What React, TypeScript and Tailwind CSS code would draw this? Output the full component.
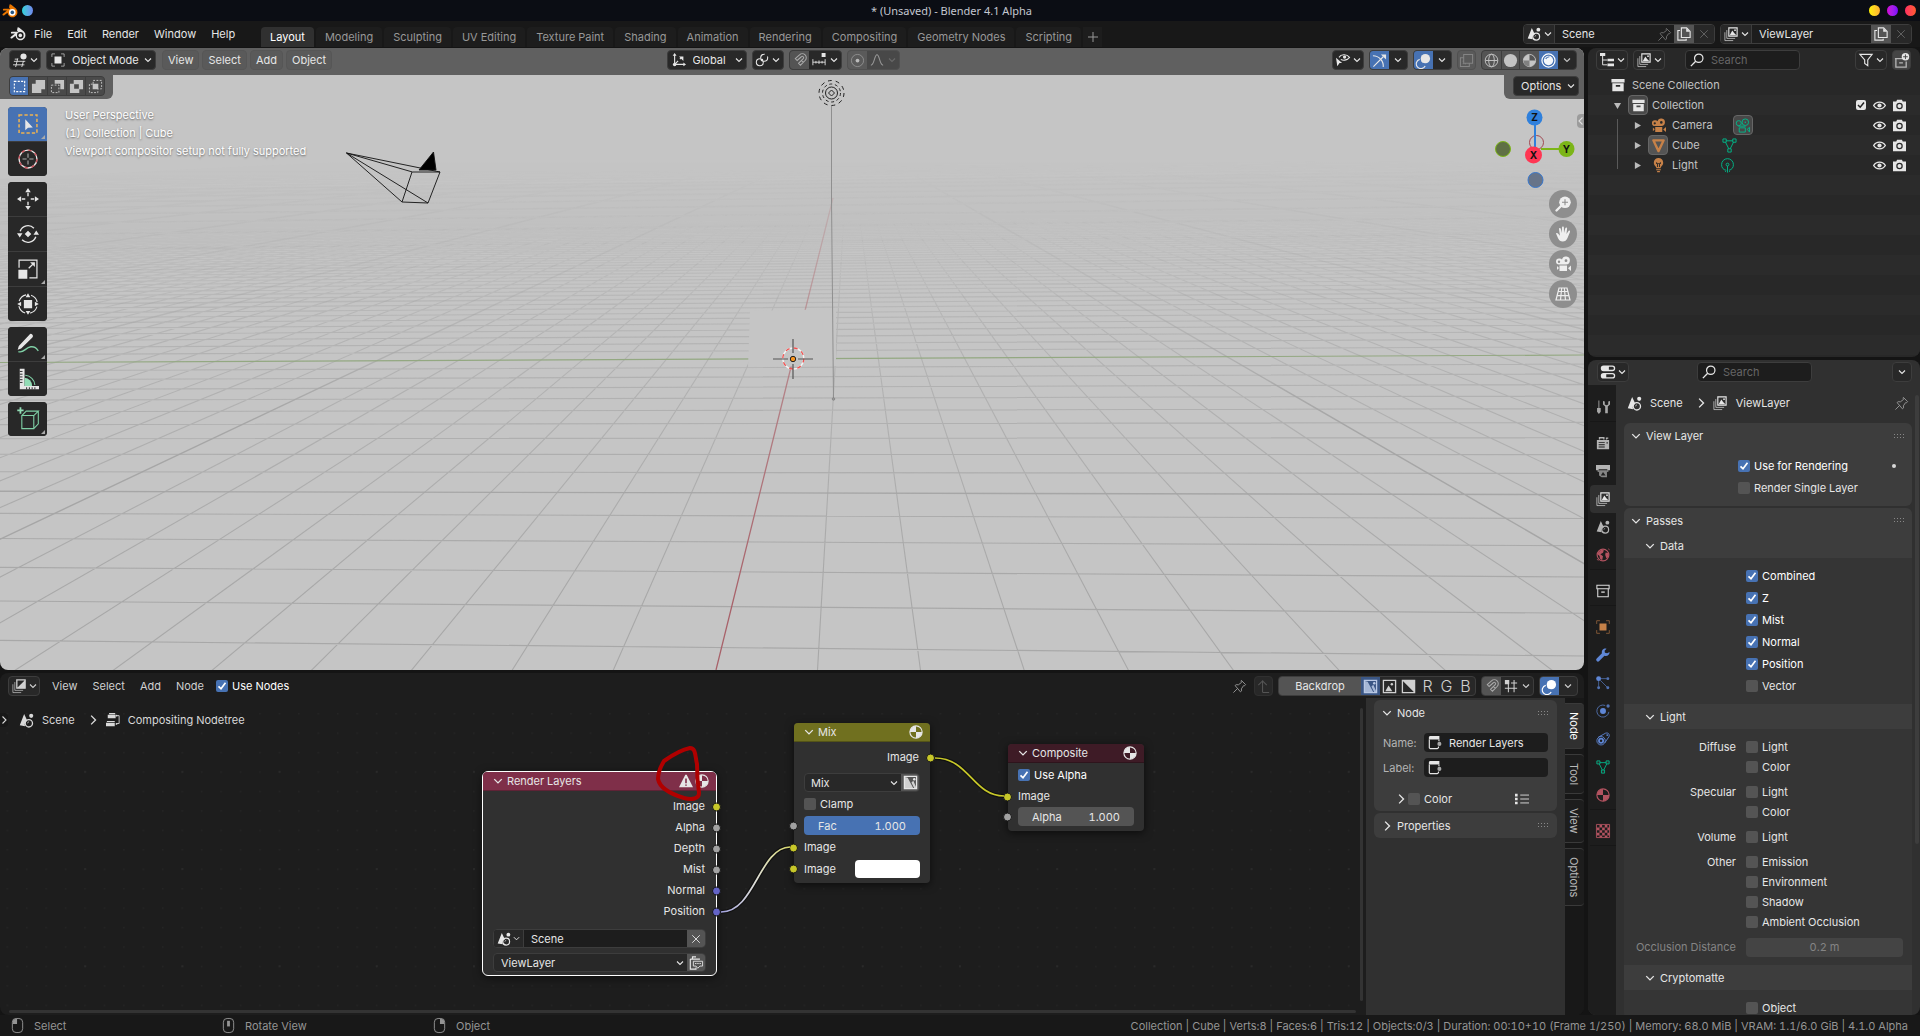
import type { ReactNode } from 'react';
import { clsx } from 'clsx';

const line = { fill: 'none', stroke: 'currentColor' } as const;

const icons: Record<string, ReactNode> = {
  blender: (
    <>
      <path d="M7.6 1.4c.6-.3 1.2 0 1.7.4l4.6 3.8a5 5 0 1 1-8.4 4.2L2 12.4a1 1 0 0 1-1.3-1.5L5 7.6H1.8a.9.9 0 0 1 0-1.8h6.4L7 4.6z" />
      <circle cx="10.3" cy="9.4" r="3.3" fill="var(--hole, #181818)" />
      <circle cx="10.3" cy="9.4" r="1.8" fill="var(--pupil, currentColor)" />
    </>
  ),
  editor3d: (
    <>
      <circle cx="12" cy="4" r="3.5" />
      <path d="M1 9.5h13M0 13.5h13M5.5 6 3 16M12 9l-2 7M2 7h3" {...line} />
    </>
  ),
  objectMode: (
    <>
      <path d="M4 4h8v8H4z" />
      <path d="M1 4.5V1h3.5M11.5 1H15v3.5M15 11.5V15h-3.5M4.5 15H1v-3.5" {...line} opacity=".7" />
    </>
  ),
  selNew: <path d="M2.5 2.5h11v11h-11z" {...line} strokeWidth="1.2" strokeDasharray="2.2 1.4" />,
  selExtend: <path d="M5 1h10v10h-4v4H1V5h4z" />,
  selSub: (
    <>
      <path d="M5 1h10v10h-4V5H5z" />
      <path d="M1.5 6.5h8v8h-8z" {...line} strokeDasharray="2 1.5" />
    </>
  ),
  selInvert: <path fillRule="evenodd" d="M5 1h10v10h-4v4H1V5h4zM5.5 5.5v5h5v-5z" />,
  selAnd: (
    <>
      <path d="M5 5h6v6H5z" />
      <path d="M5.5 5V1.5h9v9H11M5 5.5H1.5v9h9V11" {...line} strokeDasharray="2 1.5" />
    </>
  ),
  selectBox: (
    <>
      <path d="M1.5 1.5h13v13h-13z" fill="none" stroke="#f0b350" strokeWidth="1.1" strokeDasharray="2.4 1.5" />
      <path d="M6 4.5v8l2-1.8 3.5-.2z" />
    </>
  ),
  cursor: (
    <>
      <circle cx="8" cy="8" r="6.5" {...line} />
      <circle cx="8" cy="8" r="6.5" fill="none" stroke="#c9505a" strokeDasharray="2.5 2.6" />
      <path d="M8 4v3M8 9v3M4 8h3M9 8h3" {...line} strokeWidth=".8" opacity=".7" />
    </>
  ),
  move: (
    <>
      <path d="M8 0 10 3H6zM8 16l2-3H6zM0 8l3-2v4zM16 8l-3-2v4z" />
      <path d="M8 3.5v2.5M8 10v2.5M3.5 8H6M10 8h2.5" {...line} />
    </>
  ),
  rotate: (
    <>
      <path d="M2.3 6a6 6 0 0 1 10-2.2M13.7 10a6 6 0 0 1-10 2.2" {...line} />
      <path d="M0 7.5h4L2 10.5zM16 8.5h-4l2-3zM8 5.6 10.4 8 8 10.4 5.6 8z" />
    </>
  ),
  scale: (
    <>
      <path d="M1 8.5h6.5V15H1z" />
      <path d="M1.5 7V1.5h13v13H9M8.5 7.5l3-3" {...line} strokeWidth=".9" />
      <path d="M9.5 3h3.5v3.5z" />
    </>
  ),
  transform: (
    <>
      <path d="M5 5h6v6H5z" />
      <circle cx="8" cy="8" r="6.8" {...line} strokeWidth=".8" strokeDasharray="7 3.7" strokeDashoffset="-2" />
      <path d="M8 .2 9.7 3H6.3zM8 15.8 9.7 13H6.3zM.2 8 3 6.3v3.4zM15.8 8 13 6.3v3.4z" />
    </>
  ),
  annotate: (
    <>
      <path d="M9 1.2a1.2 1.2 0 0 1 2.2 2L3 11.2.5 12.2l.8-2.7z" />
      <path d="M1 13.5c4 1.5 5-3 9-3.5 3-.3 4 1 5.5 3" fill="none" stroke="#7fcfa5" />
    </>
  ),
  measure: (
    <>
      <path d="M2 .5h3.5V13H16v2.5H2z" />
      <path d="M2 2.5h2M2 4.5h2M2 6.5h2M2 8.5h2M2 10.5h2M7 15.5V14M9 15.5V14M11 15.5V14M13 15.5V14" fill="none" stroke="#282828" strokeWidth=".7" />
      <path d="M5.5 7a6 6 0 0 1 5.5 6H5.5z" fill="#92dcb5" />
      <path d="M6 5.3a7.5 7.5 0 0 1 7 7" fill="none" stroke="#7fcfa5" strokeWidth=".8" />
    </>
  ),
  addCube: (
    <>
      <path d="M3.5 5.5h8.7V15H3.5zM3.5 5.5l3.2-3.2h8.8l-3.3 3.2M15.5 2.3v9.2L12.2 15" fill="none" stroke="#7fcfa5" strokeWidth=".8" />
      <path d="M2.5-.5v4.6M.2 1.8h4.6" stroke="#92dcb5" strokeWidth="1.3" />
    </>
  ),
  axes: (
    <>
      <path d="M3 2v11h11M3 13l4-4M9 7l2-2" {...line} strokeWidth="1.3" />
      <path d="M3 0 .8 3h4.4zM16 13l-3-2.2v4.4zM8 4h5v5z" />
      <circle cx="3" cy="13" r="2" />
    </>
  ),
  pivot: (
    <>
      <circle cx="10.5" cy="5.5" r="4" {...line} strokeWidth="1.2" strokeDasharray="19 4" />
      <circle cx="5.5" cy="10.5" r="4" {...line} strokeWidth="1.2" strokeDasharray="19 4" />
      <circle cx="8" cy="8" r="1.4" />
    </>
  ),
  magnet: <path d="M3.5 6 8 2a4.2 4.2 0 0 1 6 6l-5 5-2-2 5-5a1.3 1.3 0 0 0-2-2L5.5 8zM12 10l-2-2" {...line} strokeWidth="1.1" />,
  increment: (
    <>
      <path d="M1 7v7M15 7v7M1 10.5h14M4.5 9v3M8 8.5v4M11.5 9v3" {...line} />
      <path d="M11 0h4.5v4.5H11z" />
    </>
  ),
  propEdit: (
    <>
      <circle cx="8" cy="8" r="6.5" {...line} strokeWidth=".9" opacity=".6" />
      <circle cx="8" cy="8" r="2" />
    </>
  ),
  falloff: <path d="M1 14c4 0 4-12 7-12s3 12 7 12" {...line} strokeWidth="1.2" />,
  visibility: (
    <>
      <path d="M3.5 5C5.5 1.5 12 .8 15.5 5 12.5 9 7.5 8.6 5.5 7.3" {...line} strokeWidth="1.2" />
      <circle cx="9.8" cy="4.7" r="1.9" />
      <path d="M0 5.5 7 11.5H4L1.5 15z" />
    </>
  ),
  gizmo: (
    <>
      <path d="M1 3a11 11 0 0 1 11 12M1.5 14.5 12 4" {...line} strokeWidth="1.2" />
      <path d="M9.5 1.5H15V7z" />
    </>
  ),
  overlay: (
    <>
      <circle cx="10" cy="6" r="5" />
      <path d="M4 6.8a5 5 0 1 0 5.8 7M6 8.5l1.5 1.5" {...line} strokeWidth="1.2" />
    </>
  ),
  xray: (
    <>
      <path d="M5 1.5h9.5V11H5zM5 5H1.5v9.5H11V11" {...line} strokeWidth="1.1" />
      <path d="M4.5 8v3.5H8" {...line} strokeDasharray="1.5 1" />
    </>
  ),
  wire: (
    <>
      <circle cx="8" cy="8" r="6.7" {...line} />
      <ellipse cx="8" cy="8" rx="3" ry="6.7" {...line} />
      <path d="M1.5 8h13" {...line} />
    </>
  ),
  solid: <circle cx="8" cy="8" r="7" />,
  matShade: (
    <>
      <circle cx="8" cy="8" r="6.5" {...line} />
      <path d="M8 8V1.5A6.5 6.5 0 0 0 8 14.5a6.5 6.5 0 0 0 6.5-6.5z" />
      <path d="M8 8v6.5A6.5 6.5 0 0 1 1.5 8z" fill="#545454" opacity=".6" />
    </>
  ),
  rendered: (
    <>
      <circle cx="8" cy="8" r="7" {...line} strokeWidth="1.3" />
      <circle cx="8" cy="8" r="5" opacity=".95" />
      <path d="M5 6.5C6 4.5 7.5 4 9 4" fill="none" stroke="#4772b3" strokeWidth="1.2" />
    </>
  ),
  scene: (
    <>
      <path d="M5.5 1 9 8.5A3.9 3.9 0 0 0 6.5 14L.8 13z" />
      <circle cx="10.5" cy="11" r="3.9" {...line} strokeWidth="1.4" />
      <circle cx="13" cy="3" r="2.2" />
      <path d="M9 11a2 2 0 0 1 1.5-1.6" {...line} strokeWidth=".8" />
    </>
  ),
  pin: <path d="M10 1.5 14.5 6l-1.3 1.3-.9-.2-2.3 3.4.2 2.2-1.2 1L3.3 7l1.2-1 2.3.2 3.3-2.5-.3-1zM6 10l-4.5 4.5" {...line} />,
  copy: (
    <>
      <path d="M5 1h6l4 4v7H5z" {...line} strokeWidth="1.3" />
      <path d="M10.5 1v4.5H15z" />
      <path d="M3.5 4H1v11h9.5v-1.5" {...line} strokeWidth="1.3" />
    </>
  ),
  close: <path d="m3 3 10 10M13 3 3 13" {...line} strokeWidth="1.2" />,
  viewLayer: (
    <>
      <path d="M5.5 1H15v9.5H5.5z" {...line} strokeWidth="1.3" />
      <path d="m6.5 9.5 3-5.5 2.3 3 1 1 1.2 1.5z" />
      <circle cx="12.6" cy="3.6" r="1" />
      <path d="M3.2 3.5V13h9.5M1 6v9.5h9.5" {...line} opacity=".75" />
    </>
  ),
  outliner: (
    <>
      <path d="M0 0h6v3.5H0zM8.5 6.5H16v3H8.5zM8.5 12H16v3H8.5z" />
      <path d="M3 3v10.5h5M3 8h5" {...line} strokeWidth="1.1" />
    </>
  ),
  filter: <path d="M1 1.5h14L10 8v6.5L6.5 12V8z" {...line} strokeWidth="1.3" />,
  newCollection: (
    <>
      <path d="M1 6h9M2 6v9h11V9M5.5 10.5h4" {...line} strokeWidth="1.4" opacity=".7" />
      <circle cx="12.2" cy="4" r="4" />
      <path d="M12.2 1.5v5M9.7 4h5" stroke="#454545" />
    </>
  ),
  collection: (
    <>
      <path d="M.5 1h15v4H.5z" />
      <path fillRule="evenodd" d="M1.5 6h13v9h-13zM5.5 8v2h5V8z" />
    </>
  ),
  collectionLine: (
    <>
      <path d="M1 1.5h14v4H1zM2 5.5h12v9H2z" {...line} strokeWidth="1.2" />
      <path d="M6 8.5h4V10H6z" />
    </>
  ),
  camObj: (
    <>
      <path fillRule="evenodd" d="M4 2.5a2.7 2.7 0 1 0 0 6h7a4 4 0 1 0-4-5A3 3 0 0 0 4 2.5zM4 4.5a1.2 1.2 0 1 1 0 2.4 1.2 1.2 0 0 1 0-2.4zM11 3.3a1.4 1.4 0 1 1 0 2.8 1.4 1.4 0 0 1 0-2.8z" />
      <path d="M4.5 9.5H12V15H4.5zM2 10l2 2-2 2zM16 9.5V15l-3-2.7z" />
    </>
  ),
  camData: (
    <>
      <circle cx="4" cy="5.5" r="2.7" {...line} />
      <circle cx="11" cy="4.5" r="3.5" {...line} />
      <circle cx="11" cy="4.5" r=".8" />
      <path d="M3.5 8.7h8M4.5 10.5H11V15H4.5zM13 12l2.5-2v5z" {...line} />
    </>
  ),
  meshObj: <path d="M2.5 2.5h11L8 14z" {...line} strokeWidth="2.5" strokeLinejoin="round" />,
  meshData: (
    <>
      <path d="M3 3h10L8 13z" {...line} />
      <path d="M1 1h3.5v3.5H1zM11.5 1H15v3.5h-3.5zM6.2 11.5h3.6V15H6.2z" fill="#2b2b2b" stroke="currentColor" />
    </>
  ),
  bulb: (
    <>
      <path fillRule="evenodd" d="M8 0a5 5 0 0 1 5 5c0 3-2.5 3.5-2.8 6H5.8C5.5 8.5 3 8 3 5a5 5 0 0 1 5-5zM5.5 4.5v2h1v3h1v-3h1v3h1v-3h1v-2h-1v1h-3v-1z" />
      <path d="M5.5 12.5h5M6.5 14.5h3" {...line} strokeWidth="1.2" />
    </>
  ),
  lightData: (
    <>
      <circle cx="8" cy="7" r="6.3" {...line} strokeDasharray="30 3" strokeDashoffset="-11" />
      <circle cx="8" cy="7" r="1.5" {...line} />
      <path d="M8 8.5v7M5.5 14l1 1M10.5 14l-1 1" {...line} />
    </>
  ),
  eye: (
    <>
      <path d="M.8 8C4 2.5 12 2.5 15.2 8 12 13.5 4 13.5.8 8z" {...line} strokeWidth="1.7" />
      <circle cx="8" cy="8" r="2.6" />
    </>
  ),
  photo: <path fillRule="evenodd" d="M0 3h4l1-2h6l1 2h4v12H0zM8 4.5a4 4 0 1 0 0 8 4 4 0 0 0 0-8zM8 6a2.5 2.5 0 1 1 0 5 2.5 2.5 0 0 1 0-5z" />,
  properties: <path fillRule="evenodd" d="M3 .5h10a3 3 0 0 1 0 6.5H3A3 3 0 0 1 3 .5zM9 2v3.5h4A1.7 1.7 0 0 0 13 2zM3 9h10a3 3 0 0 1 0 6.5H3A3 3 0 0 1 3 9zm3 1.5V14h7a1.7 1.7 0 0 0 0-3.5z" />,
  tool: (
    <>
      <path d="M2.8.5h1V9h-1zM1.2 9h4.2v4.5L3.3 16l-2.1-2.5z" />
      <path d="M8 1v4l2.5 2.5V15h3V7.5L16 5V1l-2 .8V5l-2 1-2-1V1.8z" />
    </>
  ),
  renderTab: (
    <>
      <path fillRule="evenodd" d="M1 4.5h14V15H1zM3 7v1h7V7zm0 2.5v1h7v-1zm0 2.5v1h7v-1zm9-5v1.5h1.5V7z" />
      <path d="M4 4V2h5v2M12 4V2.5h2" {...line} strokeWidth="1.5" />
    </>
  ),
  output: (
    <>
      <path d="M0 1h16v6h-2v2h-1V6H3v3H2V7H0z" />
      <path d="M3.5 7h9v8h-6l-3-2z" opacity=".7" />
      <path d="m5.5 13 2.5-4 3 4z" fill="#222" />
    </>
  ),
  world: (
    <>
      <circle cx="8" cy="8" r="6.7" {...line} strokeWidth="1.3" />
      <path d="M2 5.5 6 2l3 .5-1 3L5 7l3 2.5-1 4.5-2.5-2L4 9 2 7.5zM11 5l3.5 1v4L12 12l-1.5-4z" />
      <path d="M1 13l2 1M14 1l1.5 1" {...line} />
    </>
  ),
  objectTab: (
    <>
      <path d="M4 4h8v8H4z" />
      <path d="M.8 4.5V.8h3.7M11.5.8h3.7v3.7M15.2 11.5v3.7h-3.7M4.5 15.2H.8v-3.7" {...line} opacity=".65" />
    </>
  ),
  wrench: <path d="M15.5 4.5 12.8 6 10.2 5.5 9.8 3 12 .8C9 0 6 2.3 6.8 6L.8 12a2 2 0 0 0 2.9 2.9l6-6c3.5.9 6-1.5 5.8-4.4z" />,
  particles: (
    <>
      <circle cx="3" cy="3" r="2.8" />
      <circle cx="13.5" cy="3" r="1.7" opacity=".8" />
      <circle cx="13.5" cy="13.5" r="1.7" opacity=".8" />
      <circle cx="3" cy="13.5" r="1.7" opacity=".8" />
      <path d="M5 3h7M3 5v7M5 5l7.5 7.5" {...line} opacity=".7" />
    </>
  ),
  physics: (
    <>
      <circle cx="8" cy="8" r="3.4" />
      <circle cx="13.8" cy="2.3" r="1.9" opacity=".8" />
      <path d="M10.5 1.7A6.9 6.9 0 1 0 14.7 9" {...line} opacity=".8" />
    </>
  ),
  constraint: (
    <>
      <circle cx="5.8" cy="10" r="4.8" {...line} />
      <circle cx="5.8" cy="10" r="2.4" {...line} strokeWidth="2" />
      <path d="M2.5 6 11 1.3c2.5-1 4.8 1 4 3.7L10 12.5" {...line} />
      <circle cx="12.8" cy="3.5" r="1" />
    </>
  ),
  material: (
    <>
      <circle cx="8" cy="8" r="7" {...line} strokeWidth="1.3" />
      <path d="M8 8V1A7 7 0 0 0 1 8zM8 8h7a7 7 0 0 1-7 7z" />
    </>
  ),
  texture: (
    <>
      <path d="M.5.5h15v15H.5z" {...line} />
      <path d="M4 1h3v3H4zM10 1h3v3h-3zM1 4h3v3H1zM7 4h3v3H7zM13 4h2.5v3H13zM4 7h3v3H4zM10 7h3v3h-3zM1 10h3v3H1zM7 10h3v3H7zM13 10h2.5v3H13zM4 13h3v2.5H4zM10 13h3v2.5h-3z" />
    </>
  ),
  compositor: (
    <>
      <path d="M5.5 1H15v9.5H5.5z" {...line} strokeWidth="1.5" />
      <path d="M15 1v9.5H5.5z" />
      <path d="M3.2 3.5V13h9.5M1 6v9.5h9.5" {...line} opacity=".75" />
    </>
  ),
  nodeTree: (
    <>
      <path d="M3.5 0h7v1.5h-7zM2 2h9v4H2zM1 9h9v1.2H1zM0 11h10v4H0z" />
      <path d="M12.5 3H15v9h-3" {...line} />
      <circle cx="12" cy="3" r="1" />
      <circle cx="12" cy="12.5" r="1" />
    </>
  ),
  upArrow: <path d="M7 14V2L2.5 6.5M7 2l4.5 4.5M7 14.5h7" {...line} strokeWidth="1.1" />,
  imgAlpha: (
    <>
      <path d="M1.5 1.5h13v13h-13z" {...line} strokeWidth="1.4" />
      <path d="M2 2v12h9L5 3zM9 8l2-2 3.5 8H12z" opacity=".85" />
      <circle cx="12" cy="4.5" r="1.3" />
    </>
  ),
  imgColor: (
    <>
      <path d="M1.5 1.5h13v13h-13z" {...line} strokeWidth="1.4" />
      <path d="m3.5 13 3.5-6 4 6z" />
      <circle cx="10.5" cy="5.5" r="1.3" />
    </>
  ),
  imgMatte: (
    <>
      <path d="M1.5 1.5h13v13h-13z" {...line} strokeWidth="1.4" />
      <path d="M2 2h12v12z" />
    </>
  ),
  snapGrid: (
    <>
      <path d="M5 3v12M11.5 1v14M1 10.5h14M8 4.5h7" {...line} strokeWidth="1.2" />
      <path d="M1 1h5v5H1z" />
    </>
  ),
  nodeIcon: (
    <>
      <path d="M2 0h11v4H1V1z" />
      <path d="M1.5 4v9.5l1 1h8l1.5-1V12M12.5 4v2" {...line} strokeWidth="1.3" />
      <circle cx="13" cy="9" r="2.3" opacity=".7" />
    </>
  ),
  presets: (
    <>
      <path d="M6 3.5h10M6 8h10M6 12.5h10" {...line} />
      <path d="M0 2h3v3H0zM0 6.5h3v3H0zM0 11h3v3H0z" />
    </>
  ),
  warning: (
    <>
      <path d="M7.2.8h1.6L16 15H0z" />
      <path d="M7.1 5h1.8v5.5H7.1zM7.1 12h1.8v1.5H7.1z" fill="#7d2c47" />
    </>
  ),
  renderLayer: (
    <>
      <path d="M1.5 3.5h11M4 3V1h4M1.5 3.5V15H8v-2" {...line} strokeWidth="1.3" />
      <path d="M5 6h10.5v5.5h-3L10 14l-2-2.5H5z" {...line} />
      <path d="M7 8h1.5v1H7zM9.5 8H11v1H9.5zM12 8h1.5v1H12z" />
    </>
  ),
  search: (
    <>
      <circle cx="10" cy="6" r="4.8" {...line} strokeWidth="1.4" />
      <path d="M6.5 9.5 1 15" {...line} strokeWidth="1.6" />
    </>
  ),
  zoom: (
    <>
      <circle cx="10" cy="6.3" r="5.8" />
      <path d="M6 10 1.5 14.5" {...line} strokeWidth="2.4" strokeLinecap="round" />
      <path d="M10 3.3v6M7 6.3h6" stroke="#8e8e8e" strokeWidth="1.1" />
    </>
  ),
  hand: <path d="M1 7.5c.7-.8 1.6-.5 2.2.2L5 9.7 4 3.2c-.2-1.5 1.5-1.8 1.8-.4L6.8 7 7 1.5c0-1.5 1.9-1.5 1.9 0L9 7l1.3-4.8c.4-1.3 2-.9 1.8.4L11.5 8l1.8-2.8c.7-1.2 2.2-.4 1.7.8L12.5 12c-1 2.5-2.5 3.5-4.8 3.5-2.5 0-3.4-1-4.5-3z" />,
  gridPersp: <path d="M4 2h8l3 12H1zM3.2 5.5h9.6M2.2 9.7h11.6M6.7 2 5.5 14M9.3 2l1.2 12" {...line} strokeWidth="1.2" />,
  mouseL: (
    <>
      <rect x="2.5" y=".5" width="11" height="15" rx="4" {...line} />
      <path d="M3 6.5V4a3 3 0 0 1 3-3h1.5v5.5z" />
    </>
  ),
  mouseM: (
    <>
      <rect x="2.5" y=".5" width="11" height="15" rx="4" {...line} />
      <path d="M6.5 3h3v6h-3z" />
    </>
  ),
  mouseR: (
    <>
      <rect x="2.5" y=".5" width="11" height="15" rx="4" {...line} />
      <path d="M13 6.5V4a3 3 0 0 0-3-3H8.5v5.5z" />
    </>
  ),
};

function Icon({ name, className = 'size-4' }: { name: string; className?: string }) {
  return (
    <svg viewBox="0 0 16 16" fill="currentColor" aria-hidden="true" className={clsx('shrink-0 overflow-visible', className)}>
      {icons[name]}
    </svg>
  );
}

function Chevron({ dir = 'down', className = 'size-2' }: { dir?: 'down' | 'right' | 'left'; className?: string }) {
  return (
    <svg viewBox="0 0 8 8" aria-hidden="true" className={clsx('shrink-0', className)}>
      <path
        d={dir === 'down' ? 'M1 2.5 4 5.5 7 2.5' : dir === 'right' ? 'M2.5.5 6 4 2.5 7.5' : 'M5.5.5 2 4l3.5 3.5'}
        fill="none"
        stroke="currentColor"
        strokeWidth="1.1"
      />
    </svg>
  );
}

const box = 'h-5 rounded border border-[#3d3d3d] bg-[#282828]';

function MenuButton({ icon, label, className }: { icon: string; label: string; className?: string }) {
  return (
    <button aria-label={label} className={clsx('flex h-5 w-8 shrink-0 items-center justify-center gap-[3px] rounded border border-[#3d3d3d] bg-[#282828]', className)}>
      <Icon name={icon} className="size-[14px]" />
      <Chevron />
    </button>
  );
}

function IconButton({ icon, label, className, width = 'w-[19px]' }: { icon: string; label: string; className?: string; width?: string }) {
  return (
    <button aria-label={label} className={clsx('flex h-full shrink-0 items-center justify-center', width, className)}>
      <Icon name={icon} className="size-[15px]" />
    </button>
  );
}

function Dropdown({ value, label, className, selectClass }: { value: string; label: string; className?: string; selectClass?: string }) {
  return (
    <div className={clsx('relative min-w-0', className)}>
      <select aria-label={label} className={clsx('size-full appearance-none outline-none', selectClass)}>
        <option>{value}</option>
      </select>
      <Chevron className="pointer-events-none absolute top-1/2 right-[3px] size-2 -translate-y-1/2" />
    </div>
  );
}

function Check({ label, checked, className }: { label: string; checked?: boolean; className?: string }) {
  return (
    <label className={clsx('flex items-center gap-1', className)}>
      <span className="relative block size-3 shrink-0">
        <input type="checkbox" defaultChecked={checked} className="peer block size-3 appearance-none rounded-xs bg-[#545454] checked:bg-[#4772b3]" />
        <svg viewBox="0 0 12 12" className="pointer-events-none absolute inset-0 hidden peer-checked:block" aria-hidden="true">
          <path d="m2.5 6.3 2.5 2.5 4.5-6" fill="none" stroke="#fff" strokeWidth="1.7" />
        </svg>
      </span>
      <span className="whitespace-nowrap">{label}</span>
    </label>
  );
}

function Grip() {
  return (
    <svg viewBox="0 0 11 5" className="h-[5px] w-[11px] text-[#888]" aria-hidden="true">
      <path d="M0 .5h11M0 3.5h11" stroke="currentColor" strokeDasharray="1 2" />
    </svg>
  );
}

const workspaces = ['Layout', 'Modeling', 'Sculpting', 'UV Editing', 'Texture Paint', 'Shading', 'Animation', 'Rendering', 'Compositing', 'Geometry Nodes', 'Scripting'];

function TitleBar() {
  return (
    <header className="relative flex h-[21px] shrink-0 items-center justify-between bg-[#0b0d14] px-[2px]">
      <div className="flex items-center gap-1 text-[#ea7600] [--hole:#fff] [--pupil:#265787]">
        <Icon name="blender" className="size-4" />
        <span className="size-[11px] rounded-full bg-linear-to-r from-[#25d3d8] to-[#6f86ee]" />
      </div>
      <h1 className="absolute left-1/2 -translate-x-[89px] font-['Noto_Sans',sans-serif] text-[#c3c7d1]">* (Unsaved) - Blender 4.1 Alpha</h1>
      <div className="flex gap-[7px] pr-[2px]">
        <button aria-label="Minimize" className="size-[11px] rounded-full bg-linear-to-r from-[#fff200] to-[#ffae30]" />
        <button aria-label="Maximize" className="size-[11px] rounded-full bg-linear-to-r from-[#d400d4] to-[#7a00ff]" />
        <button aria-label="Close" className="size-[11px] rounded-full bg-linear-to-r from-[#ff2d60] to-[#ff5a2d]" />
      </div>
    </header>
  );
}

function DataField({ icon, value, pin }: { icon: string; value: string; pin?: boolean }) {
  return (
    <div className="flex h-5 overflow-hidden rounded border border-[#3d3d3d] bg-[#1d1d1d]">
      <button aria-label={'Browse ' + value} className="flex w-[31px] items-center justify-center gap-[3px] border-r border-[#3d3d3d] bg-[#282828]">
        <Icon name={icon} className="size-[14px]" />
        <Chevron />
      </button>
      <input aria-label={value + ' name'} defaultValue={value} className={clsx('min-w-0 bg-transparent pl-[7px] outline-none', pin ? 'w-[100px]' : 'w-[119px]')} />
      {pin && <IconButton icon="pin" label="Pin scene" className="text-[#707070]" />}
      <button aria-label={'New ' + value} className="flex w-5 items-center justify-center bg-[#545454]">
        <Icon name="copy" className="size-[14px]" />
      </button>
      <button aria-label={'Remove ' + value} className="flex w-5 items-center justify-center bg-[#282828] text-[#666]">
        <Icon name="close" className="size-3" />
      </button>
    </div>
  );
}

function TopBar() {
  return (
    <div className="flex h-[26px] shrink-0 justify-between bg-[#181818]">
      <div className="flex">
        <nav className="flex items-center pl-2.5">
          <Icon name="blender" className="mr-2 size-4" />
          <div className="flex w-[227px] gap-[15px]">
            {['File', 'Edit', 'Render', 'Window', 'Help'].map((m) => (
              <button key={m}>{m}</button>
            ))}
          </div>
        </nav>
        <div role="tablist" className="flex items-end gap-0.5">
          {workspaces.map((w, i) => (
            <button
              key={w}
              role="tab"
              className={clsx('h-5 rounded-t px-[9px]', i === 0 ? 'bg-[#303030] text-white' : 'bg-[#1d1d1d] text-[#989898]')}
            >
              {w}
            </button>
          ))}
          <button aria-label="Add workspace" className="flex h-5 w-[19px] items-center justify-center bg-[#1d1d1d] text-[#989898]">
            <svg viewBox="0 0 10 10" className="size-2.5" aria-hidden="true">
              <path d="M5 0v10M0 5h10" stroke="currentColor" />
            </svg>
          </button>
        </div>
      </div>
      <div className="flex gap-[5px] pt-[3px] pr-2">
        <DataField icon="scene" value="Scene" pin />
        <DataField icon="viewLayer" value="ViewLayer" />
      </div>
    </div>
  );
}

// ground plane -> screen
function project(u: number, v: number) {
  const w = 1 - 0.03773 * u - 0.002118 * v;
  return [(793 - 32.01 * u + 40.8 * v) / w, (358.7 - 5.177 * u - 0.955 * v) / w];
}

function segment(a: number[], b: number[]) {
  return `M${a[0].toFixed(1)} ${a[1].toFixed(1)}L${b[0].toFixed(1)} ${b[1].toFixed(1)}`;
}

function gridPath(step: number, far: number, side: number, skipTens: boolean) {
  let d = '';
  for (let u = 16; u >= far; u--) {
    if (u % step || u === 0 || (skipTens && u % 10 === 0)) continue;
    d += segment(project(u, -side), project(u, side));
  }
  for (let v = -side; v <= side; v++) {
    if (v % step || v === 0 || (skipTens && v % 10 === 0)) continue;
    d += segment(project(16.5, v), project(far, v));
  }
  return d;
}

function ViewportScene() {
  return (
    <svg viewBox="0 48 1584 622" preserveAspectRatio="xMidYMid slice" className="absolute inset-0 size-full" aria-label="3D scene">
      <defs>
        <linearGradient id="fadeMinor" gradientUnits="userSpaceOnUse" x1="0" y1="160" x2="0" y2="600">
          <stop offset="0" stopColor="#fff" stopOpacity="0" />
          <stop offset=".12" stopColor="#fff" stopOpacity=".1" />
          <stop offset=".4" stopColor="#fff" stopOpacity=".6" />
          <stop offset="1" stopColor="#fff" />
        </linearGradient>
        <linearGradient id="fadeMajor" gradientUnits="userSpaceOnUse" x1="0" y1="160" x2="0" y2="420">
          <stop offset="0" stopColor="#fff" stopOpacity="0" />
          <stop offset=".5" stopColor="#fff" stopOpacity=".35" />
          <stop offset="1" stopColor="#fff" />
        </linearGradient>
        <linearGradient id="fadeRed" gradientUnits="userSpaceOnUse" x1="0" y1="200" x2="0" y2="600">
          <stop offset="0" stopColor="#b57a7e" stopOpacity=".25" />
          <stop offset=".4" stopColor="#b0757b" stopOpacity=".8" />
          <stop offset="1" stopColor="#a8626a" />
        </linearGradient>
        <mask id="minor" maskUnits="userSpaceOnUse" x="0" y="48" width="1584" height="622">
          <path d="M0 48h1584v622H0z" fill="url(#fadeMinor)" />
        </mask>
        <mask id="major" maskUnits="userSpaceOnUse" x="0" y="48" width="1584" height="622">
          <path d="M0 48h1584v622H0z" fill="url(#fadeMajor)" />
        </mask>
      </defs>
      <g fill="none">
        <g mask="url(#minor)">
          <path d={gridPath(1, -110, 120, true)} stroke="#a8a8a8" strokeWidth="1.1" />
        </g>
        <g mask="url(#major)">
          <path d={gridPath(10, -300, 150, false)} stroke="#a6a6a6" strokeWidth="1.4" />
        </g>
        <path d="M0 362.500 1584 355" stroke="#93a881" strokeWidth="1.2" />
        <path d="M716 670 793 359 833 198" stroke="url(#fadeRed)" strokeWidth="1.3" />
      </g>
      <path d="m750 311 86-2v57l-88 1z" fill="#c5c5c5" />
      <path d="M831.5 106v94l2 199" fill="none" stroke="#8f8f8f" />
      <circle cx="833.5" cy="399" r="1.3" fill="#999" stroke="#777" strokeWidth=".6" />
      <g fill="none" stroke="#222">
        <path d="m831.5 90 3 3-3 3-3-3z" />
        <circle cx="831.5" cy="93" r="6" />
        <circle cx="831.5" cy="93" r="9" strokeDasharray="3 2.7" />
        <circle cx="831.5" cy="93" r="12.5" strokeDasharray="4 3.85" />
      </g>
      <g fill="none" stroke="#111" strokeWidth=".9">
        <path d="m346.5 153 66 19h27.5l-12 31-26-1 10-30M346.5 153 440 172M346.5 153l55.500 49M346.5 153l81.500 50" />
        <path d="m419 170 14.5-18 2.5 18z" fill="#000" />
      </g>
      <g fill="none">
        <circle cx="793.3" cy="358.5" r="10.5" stroke="#f4f4f4" strokeWidth="1.3" />
        <circle cx="793.3" cy="358.5" r="10.5" stroke="#f0504f" strokeWidth="1.3" strokeDasharray="4.1 4.15" />
        <path d="M793 339v14M793 364v15M773 359h15M798 359h15" stroke="#555" strokeWidth="1.2" />
        <circle cx="793" cy="359" r="2.7" fill="#f7931e" stroke="#222" />
      </g>
    </svg>
  );
}

function AxisGizmo() {
  return (
    <svg viewBox="0 0 82 82" className="absolute top-[60px] right-[7px] size-[82px]" role="img" aria-label="Navigation gizmo">
      <circle cx="41.5" cy="34.5" r="7" fill="none" stroke="#a04852" />
      <path d="M40 10v32" stroke="#2f80dc" strokeWidth="2" />
      <path d="M46 41h24" stroke="#7cb518" strokeWidth="2" />
      <circle cx="8" cy="41" r="7.5" fill="#5f7044" stroke="#7cb518" />
      <circle cx="40.5" cy="72" r="7.5" fill="#677489" stroke="#3877cc" />
      <circle cx="39.5" cy="9.5" r="8" fill="#2f80dc" />
      <circle cx="71.5" cy="41" r="8" fill="#7cb518" />
      <circle cx="38.5" cy="47" r="8.5" fill="#ff3653" />
      <g fontSize="10" fontWeight="700" textAnchor="middle" fill="#111">
        <text x="39.5" y="13">Z</text>
        <text x="71.5" y="44.5">Y</text>
        <text x="38.5" y="50.5">X</text>
      </g>
    </svg>
  );
}

const toolGroups = [
  [['selectBox', 'Select Box', true], ['cursor', 'Cursor', false]],
  [['move', 'Move', false], ['rotate', 'Rotate', false], ['scale', 'Scale', true], ['transform', 'Transform', false]],
  [['annotate', 'Annotate', true], ['measure', 'Measure', false]],
  [['addCube', 'Add Cube', true]],
] as [string, string, boolean][][];

function Toolbar() {
  return (
    <div className="absolute top-[59px] left-2 flex w-[39px] flex-col gap-1.5">
      {toolGroups.map((g, i) => (
        <div key={i} className="flex flex-col gap-px overflow-hidden rounded bg-[#3d3d3d]">
          {g.map(([icon, label, more]) => (
            <button
              key={icon}
              aria-label={label}
              className={clsx('relative flex h-[34px] items-center justify-center', icon === 'selectBox' ? 'bg-[#4772b3]' : 'bg-[#282828]')}
            >
              <Icon name={icon} className="size-[22px]" />
              {more && (
                <svg viewBox="0 0 4 4" className="absolute right-0.5 bottom-0.5 size-1 text-[#aaa]" aria-hidden="true">
                  <path d="M4 0v4H0z" fill="currentColor" />
                </svg>
              )}
            </button>
          ))}
        </div>
      ))}
    </div>
  );
}

function Viewport() {
  return (
    <section className="relative min-h-0 flex-1 overflow-hidden rounded-lg bg-[#c5c5c5]">
      <ViewportScene />
      <div className="relative flex h-[27px] items-center bg-[#606060] pr-[7px] pb-[3px] pl-[9px]">
        <div className="flex flex-1 items-center">
          <MenuButton icon="editor3d" label="Editor type" />
          <div className={clsx(box, 'ml-[5px] flex w-[110px] items-center pl-1')}>
            <Icon name="objectMode" className="size-[14px]" />
            <Dropdown value="Object Mode" label="Mode" className="h-full flex-1" selectClass="pl-[7px]" />
          </div>
          <div className="ml-1.5 flex gap-[3px]">
            {['View', 'Select', 'Add', 'Object'].map((m) => (
              <button key={m} className="h-5 rounded border border-[#565656] bg-[#5a5a5a] px-[5px] leading-4">{m}</button>
            ))}
          </div>
        </div>
        <div className="mr-5 flex gap-[5px]">
          <div className={clsx(box, 'flex w-20 items-center pl-1')}>
            <Icon name="axes" className="size-[14px]" />
            <Dropdown value="Global" label="Transform orientation" className="h-full flex-1" selectClass="pl-[7px]" />
          </div>
          <MenuButton icon="pivot" label="Pivot point" />
          <div className={clsx(box, 'flex overflow-hidden')}>
            <IconButton icon="magnet" label="Snap" className="bg-[#545454] text-[#aaa]" />
            <button aria-label="Snapping" className="flex w-8 items-center justify-center gap-1">
              <Icon name="increment" className="size-[14px]" />
              <Chevron />
            </button>
          </div>
          <div className="flex h-5 overflow-hidden rounded border border-[#505050] bg-[#484848] text-[#999]">
            <IconButton icon="propEdit" label="Proportional editing" className="bg-[#5a5a5a] text-[#bbb]" />
            <button aria-label="Falloff" className="flex w-8 items-center justify-center gap-1">
              <Icon name="falloff" className="size-[14px]" />
              <Chevron className="size-2 opacity-40" />
            </button>
          </div>
        </div>
        <div className="flex flex-1 justify-end gap-[5px]">
          <MenuButton icon="visibility" label="Object visibility" />
          {['gizmo', 'overlay'].map((n) => (
            <div key={n} className={clsx(box, 'flex overflow-hidden')}>
              <IconButton icon={n} label={'Show ' + n} className="bg-[#4772b3]" />
              <button aria-label={n + ' options'} className="flex w-[18px] items-center justify-center">
                <Chevron />
              </button>
            </div>
          ))}
          <div className="h-5 rounded border border-[#505050] bg-[#5a5a5a] text-[#848484]">
            <IconButton icon="xray" label="Toggle X-Ray" width="w-[17px]" />
          </div>
          <div className="flex h-5 overflow-hidden rounded border border-[#3d3d3d] bg-[#545454] text-[#c4c4c4]">
            <IconButton icon="wire" label="Wireframe" />
            <IconButton icon="solid" label="Solid" className="border-x border-[#3d3d3d]" />
            <IconButton icon="matShade" label="Material preview" />
            <IconButton icon="rendered" label="Rendered" className="bg-[#4772b3] text-white" />
            <button aria-label="Shading options" className="flex w-[18px] items-center justify-center bg-[#282828]">
              <Chevron />
            </button>
          </div>
        </div>
      </div>
      <div className="relative flex items-start justify-between">
        <div className="h-6 rounded-br-md bg-[#606060] pt-px pr-2 pl-[9px]">
          <div className="flex h-5 gap-px overflow-hidden rounded border border-[#3d3d3d] bg-[#3d3d3d] text-[#c4c4c4]">
            {['selNew', 'selExtend', 'selSub', 'selInvert', 'selAnd'].map((n, i) => (
              <button key={n} aria-label={n} className={clsx('flex h-full w-[18px] items-center justify-center', i === 0 ? 'bg-[#4772b3] text-white' : 'bg-[#4a4a4a]')}>
                <Icon name={n} className="size-[15px]" />
              </button>
            ))}
          </div>
        </div>
        <div className="h-6 rounded-bl-md bg-[#606060] pt-px pr-[5px] pl-[9px]">
          <button className={clsx(box, 'flex w-[66px] items-center justify-between pr-[3px] pl-[7px]')}>
            Options
            <Chevron />
          </button>
        </div>
      </div>
      <Toolbar />
      <div className="absolute top-[58px] left-[65px] leading-[18px] text-white text-shadow-[0_1px_2px_rgba(0,0,0,0.5)]">
        <p>User Perspective</p>
        <p>(1) Collection | Cube</p>
        <p>Viewport compositor setup not fully supported</p>
      </div>
      <AxisGizmo />
      <div className="absolute top-[142px] right-[7px] flex flex-col gap-0.5">
        {[['zoom', 'Zoom'], ['hand', 'Pan'], ['camObj', 'Camera view'], ['gridPersp', 'Perspective']].map(([n, l]) => (
          <button key={n} aria-label={l} className="flex size-7 items-center justify-center rounded-full bg-[#8e8e8e] text-[#eee]">
            <Icon name={n} className="size-4" />
          </button>
        ))}
      </div>
      <button aria-label="Show sidebar" className="absolute top-[66px] right-0 flex h-3.5 w-[7px] items-center justify-center rounded-l bg-[#9c9c9c] text-[#ddd]">
        <Chevron dir="left" />
      </button>
    </section>
  );
}

function NodeHeader({ title, color, children }: { title: string; color: string; children?: ReactNode }) {
  return (
    <div className={clsx('flex h-[19px] items-center rounded-t border-b border-black/25 pr-[7px] pl-2.5', color)}>
      <button aria-label={'Collapse ' + title} className="mr-1">
        <Chevron className="size-2.5" />
      </button>
      <span className="flex-1">{title}</span>
      {children}
      <Icon name="material" className="size-[14px]" />
    </div>
  );
}

function Socket({ side, color }: { side: 'left' | 'right'; color: string }) {
  return <span className={clsx('absolute top-1/2 size-[9px] -translate-y-1/2 rounded-full border border-[#181818]', side === 'left' ? '-left-[5px]' : '-right-[5px]', color)} />;
}

const YELLOW = 'bg-[#c7c729]';
const GREY = 'bg-[#a1a1a1]';
const VIOLET = 'bg-[#6363c7]';

const renderSockets = [['Image', YELLOW], ['Alpha', GREY], ['Depth', GREY], ['Mist', GREY], ['Normal', VIOLET], ['Position', VIOLET]];

function NodeCanvas() {
  return (
    <div className="relative min-w-0 flex-1 overflow-hidden">
      <svg className="absolute inset-0 size-full" aria-hidden="true">
        <defs>
          <pattern id="dots" width="19.44" height="19.44" patternUnits="userSpaceOnUse" x="6.5" y="15">
            <circle cx=".8" cy=".8" r=".7" fill="#282828" />
          </pattern>
          <pattern id="bigDots" width="97.2" height="97.2" patternUnits="userSpaceOnUse" x="84.2" y="72.8">
            <circle cx="1" cy="1" r="1" fill="#2c2c2c" />
          </pattern>
        </defs>
        <rect width="100%" height="100%" fill="url(#dots)" />
        <rect width="100%" height="100%" fill="url(#bigDots)" />
      </svg>

      <nav aria-label="Node tree path" className="relative flex h-11 items-center text-[#d8d8d8]">
        <button aria-label="Show toolbar" className="flex h-3.5 w-2 items-center justify-center rounded-r bg-[#181818]">
          <Chevron dir="right" />
        </button>
        <Icon name="scene" className="ml-[11px] size-[15px]" />
        <a href="#scene" className="ml-2">Scene</a>
        <Chevron dir="right" className="mr-2 ml-[13px] size-2.5" />
        <Icon name="nodeTree" className="size-[14px]" />
        <a href="#nodetree" className="ml-2">Compositing Nodetree</a>
      </nav>

      {/* Render Layers */}
      <div className="absolute top-[73px] left-[482px] w-[235px] rounded-md border border-white bg-[#303030] pb-[3px] shadow-[0_2px_8px_rgba(0,0,0,0.5)]">
        <NodeHeader title="Render Layers" color="bg-[#7f2f49]">
          <Icon name="warning" className="mr-0.5 size-[14px]" />
        </NodeHeader>
        <ul className="pt-[5px]">
          {renderSockets.map(([name, color]) => (
            <li key={name} className="relative h-[21px] pr-[11px] text-right leading-[21px]">
              {name}
              <Socket side="right" color={color} />
            </li>
          ))}
        </ul>
        <div className="mx-2.5 mt-[7px] flex h-[19px] overflow-hidden rounded border border-[#3d3d3d] bg-[#1d1d1d]">
          <button aria-label="Browse scene" className="flex w-[30px] items-center justify-center gap-0.5 border-r border-[#3d3d3d] bg-[#282828]">
            <Icon name="scene" className="size-[14px]" />
            <Chevron className="size-[7px]" />
          </button>
          <input aria-label="Scene" defaultValue="Scene" className="min-w-0 flex-1 bg-transparent pl-[7px] outline-none" />
          <button aria-label="Unlink scene" className="flex w-[18px] items-center justify-center bg-[#545454]">
            <Icon name="close" className="size-3" />
          </button>
        </div>
        <div className="mx-2.5 mt-[5px] flex h-[19px] overflow-hidden rounded border border-[#3d3d3d] bg-[#282828]">
          <Dropdown value="ViewLayer" label="View layer" className="flex-1" selectClass="pl-[7px]" />
          <button aria-label="Render this layer" className="flex w-[18px] items-center justify-center bg-[#545454]">
            <Icon name="renderLayer" className="size-[14px]" />
          </button>
        </div>
      </div>

      {/* Mix */}
      <div className="absolute top-[25px] left-[794px] w-[136px] rounded bg-[#303030] pb-1 shadow-[0_2px_8px_rgba(0,0,0,0.6)]">
        <NodeHeader title="Mix" color="bg-[#70701f]" />
        <div className="relative mt-[5px] h-[21px] pr-[11px] text-right leading-[21px]">
          Image
          <Socket side="right" color={YELLOW} />
        </div>
        <div className="mx-2.5 mt-[5px] flex h-[19px] overflow-hidden rounded border border-[#3d3d3d] bg-[#282828]">
          <Dropdown value="Mix" label="Blend type" className="flex-1" selectClass="pl-1.5" />
          <button aria-label="Include alpha" className="flex w-[18px] items-center justify-center bg-[#545454]">
            <Icon name="imgAlpha" className="size-[15px]" />
          </button>
        </div>
        <Check label="Clamp" className="h-6 px-2.5" />
        <div className="relative px-2.5">
          <label className="flex h-[19px] items-center justify-between rounded bg-[#4772b3] px-3.5">
            Fac
            <input defaultValue="1.000" className="w-12 bg-transparent text-right outline-none" />
          </label>
          <Socket side="left" color={GREY} />
        </div>
        <div className="relative mt-0.5 h-[21px] px-2.5 leading-[21px]">
          Image
          <Socket side="left" color={YELLOW} />
        </div>
        <div className="relative flex h-[21px] items-center justify-between px-2.5">
          Image
          <button aria-label="Image color" className="h-[18px] w-[65px] rounded bg-white" />
          <Socket side="left" color={YELLOW} />
        </div>
      </div>

      {/* Composite */}
      <div className="absolute top-[46px] left-[1008px] w-[136px] rounded bg-[#303030] pb-[5px] shadow-[0_2px_8px_rgba(0,0,0,0.6)]">
        <NodeHeader title="Composite" color="bg-[#3e1b26]" />
        <Check label="Use Alpha" checked className="h-[23px] px-2.5 text-white" />
        <div className="relative h-[21px] px-2.5 leading-[21px]">
          Image
          <Socket side="left" color={YELLOW} />
        </div>
        <div className="relative px-2.5">
          <label className="flex h-[19px] items-center justify-between rounded bg-[#545454] px-3.5">
            Alpha
            <input defaultValue="1.000" className="w-12 bg-transparent text-right outline-none" />
          </label>
          <Socket side="left" color={GREY} />
        </div>
      </div>

      {/* Links */}
      <svg className="pointer-events-none absolute inset-0 size-full" aria-hidden="true">
        <defs>
          <linearGradient id="link" x1="0" x2="1">
            <stop offset="0" stopColor="#a0a0dd" />
            <stop offset=".5" stopColor="#deded8" />
            <stop offset="1" stopColor="#d6d66a" />
          </linearGradient>
        </defs>
        <path d="M721 214c34 0 38-64 69-65" fill="none" stroke="#101010" strokeWidth="4" />
        <path d="M721 214c34 0 38-64 69-65" fill="none" stroke="url(#link)" strokeWidth="1.7" />
        <path d="M935 60c34 0 38 38 69 38" fill="none" stroke="#101010" strokeWidth="4" />
        <path d="M935 60c34 0 38 38 69 38" fill="none" stroke="#c7c729" strokeWidth="1.7" />
        <path
          d="M664 63c7-5 16-11 26-13 6 0 5 8 7 16 0 11 1 22 2 29 0 6-7 7-15 5-10-3-24-9-26-19 0-6 3-13 6-18z"
          fill="none"
          stroke="#b00000"
          strokeWidth="4"
          strokeLinejoin="round"
        />
      </svg>

      <span className="absolute right-[3px] top-2.5 bottom-3.5 w-[3px] rounded bg-[#333]" />
      <span className="absolute right-2.5 bottom-0.5 left-[9px] h-[3px] rounded bg-[#333]" />
    </div>
  );
}

function NodeSidebar() {
  return (
    <aside className="flex shrink-0">
      <div className="w-[199px] bg-[#303030] px-2 pt-0.5">
        <div className="h-[111px] rounded-md bg-[#3d3d3d] px-2">
          <h3 className="flex h-[26px] items-center gap-[5px]">
            <Chevron className="size-2.5" />
            <span className="flex-1">Node</span>
            <Grip />
          </h3>
          {[['Name:', 'Render Layers'], ['Label:', '']].map(([label, value], i) => (
            <label key={label} className={clsx('flex h-[19px] items-center px-px text-[#b4b4b4]', i === 0 ? 'mt-[7px]' : 'mt-1.5')}>
              <span className="w-[41px]">{label}</span>
              <span className="flex h-[19px] flex-1 items-center rounded bg-[#1d1d1d] pl-1 text-[#e6e6e6]">
                <Icon name="nodeIcon" className="size-[14px]" />
                <input defaultValue={value} className="ml-[7px] w-[92px] bg-transparent outline-none" />
              </span>
            </label>
          ))}
          <div className="mt-3 flex h-[19px] items-center pr-5 pl-3.5">
            <Chevron dir="right" className="mr-0.5 size-2.5" />
            <Check label="Color" className="flex-1" />
            <Icon name="presets" className="size-[14px]" />
          </div>
        </div>
        <h3 className="mt-0.5 flex h-[25px] items-center gap-[5px] rounded-md bg-[#3d3d3d] px-2">
          <Chevron dir="right" className="size-2.5" />
          <span className="flex-1">Properties</span>
          <Grip />
        </h3>
      </div>
      <div role="tablist" className="flex w-[19px] flex-col gap-[5px] bg-[#181818] pt-[5px]">
        {['Node', 'Tool', 'View', 'Options'].map((t, i) => (
          <button
            key={t}
            role="tab"
            className={clsx(
              'flex justify-center rounded-r border-y border-[#3a3a3a] py-2 pr-0.5',
              i === 0 ? 'bg-[#303030] text-white' : 'bg-[#1d1d1d] text-[#b8b8b8]'
            )}
          >
            <span className="[writing-mode:vertical-rl]">{t}</span>
          </button>
        ))}
      </div>
    </aside>
  );
}

function NodeEditor() {
  return (
    <section className="flex h-[342px] shrink-0 flex-col overflow-hidden rounded-lg bg-[#1d1d1d]">
      <div className="flex h-[25px] shrink-0 items-center pr-1.5 pl-2 pt-px text-[#d0d0d0]">
        <MenuButton icon="compositor" label="Editor type" />
        <div className="ml-3 flex gap-[15px]">
          {['View', 'Select', 'Add', 'Node'].map((m) => (
            <button key={m}>{m}</button>
          ))}
        </div>
        <Check label="Use Nodes" checked className="ml-3 flex-1 text-white" />
        <div className="flex items-center gap-[5px]">
          <IconButton icon="pin" label="Pin" className="text-[#989898]" />
          <div className="h-5 rounded border border-[#303030] bg-[#282828] text-[#555]">
            <IconButton icon="upArrow" label="Parent node tree" width="w-[17px]" />
          </div>
          <div className={clsx(box, 'flex overflow-hidden')}>
            <button className="w-[82px] bg-[#545454] text-[#e6e6e6]">Backdrop</button>
            <IconButton icon="imgAlpha" label="Color and alpha" className="bg-[#3a5685] text-[#b9c8e4]" />
            <IconButton icon="imgColor" label="Color" />
            <IconButton icon="imgMatte" label="Alpha" />
            {['R', 'G', 'B'].map((c) => (
              <button key={c} className="w-[19px] text-base leading-4 font-light">{c}</button>
            ))}
          </div>
          <div className={clsx(box, 'flex overflow-hidden')}>
            <IconButton icon="magnet" label="Snap" className="bg-[#545454] text-[#aaa]" />
            <button aria-label="Snapping" className="flex w-8 items-center justify-center gap-1">
              <Icon name="snapGrid" className="size-[14px]" />
              <Chevron />
            </button>
          </div>
          <div className={clsx(box, 'flex overflow-hidden')}>
            <IconButton icon="overlay" label="Show overlays" className="bg-[#4772b3] text-white" />
            <button aria-label="Overlay options" className="flex w-[18px] items-center justify-center">
              <Chevron />
            </button>
          </div>
        </div>
      </div>
      <div className="flex min-h-0 flex-1">
        <NodeCanvas />
        <NodeSidebar />
      </div>
    </section>
  );
}

function SearchBox({ label }: { label: string }) {
  return (
    <label className="flex h-5 w-[115px] items-center gap-[7px] rounded border border-[#3d3d3d] bg-[#1d1d1d] px-1">
      <Icon name="search" className="size-[14px]" />
      <input type="search" placeholder="Search" aria-label={label} className="min-w-0 flex-1 bg-transparent outline-none placeholder:text-[#666]" />
    </label>
  );
}

const objects = [
  { name: 'Camera', icon: 'camObj', data: 'camData', boxData: true },
  { name: 'Cube', icon: 'meshObj', data: 'meshData', boxIcon: true },
  { name: 'Light', icon: 'bulb', data: 'lightData' },
];

function RowToggles({ exclude }: { exclude?: boolean }) {
  return (
    <div className="ml-auto flex items-center gap-[7px] pr-[14px] text-[#e6e6e6]">
      {exclude && (
        <span className="relative block size-2.5">
          <input type="checkbox" defaultChecked aria-label="Exclude from view layer" className="block size-2.5 appearance-none rounded-xs bg-[#e6e6e6]" />
          <svg viewBox="0 0 10 10" className="pointer-events-none absolute inset-0" aria-hidden="true">
            <path d="m2 5 2.2 2.2L8 2.5" fill="none" stroke="#222" strokeWidth="1.5" />
          </svg>
        </span>
      )}
      <button aria-label="Hide in viewport">
        <Icon name="eye" className="size-[13px]" />
      </button>
      <button aria-label="Disable in renders">
        <Icon name="photo" className="size-[13px]" />
      </button>
    </div>
  );
}

function TreeArrow({ open }: { open?: boolean }) {
  return (
    <svg viewBox="0 0 8 8" className="size-[7px] shrink-0 text-[#bbb]" aria-hidden="true">
      <path d={open ? 'M0 1h8L4 8z' : 'M1 0v8l7-4z'} fill="currentColor" />
    </svg>
  );
}

function Outliner() {
  return (
    <section className="relative h-[309px] shrink-0 overflow-hidden rounded-lg bg-[#282828]">
      <div className="flex h-[27px] items-center pr-[9px] pb-[3px] pl-2">
        <MenuButton icon="outliner" label="Editor type" />
        <MenuButton icon="viewLayer" label="Display mode" className="ml-[5px]" />
        <div className="flex-1 pl-5">
          <SearchBox label="Filter outliner" />
        </div>
        <MenuButton icon="filter" label="Filter" className="mr-[5px]" />
        <div className="h-5 rounded border border-[#3d3d3d] bg-[#454545]">
          <IconButton icon="newCollection" label="New collection" width="w-[17px]" />
        </div>
      </div>
      <ul className="text-[#c3c3c3] [&>li]:flex [&>li]:h-5 [&>li]:items-center [&>li:nth-child(even)]:bg-[#2b2b2b]">
        <li className="pl-[23px]">
          <Icon name="collection" className="mr-[7px] size-[14px] text-[#e6e6e6]" />
          Scene Collection
        </li>
        <li className="pl-[26px]">
          <TreeArrow open />
          <span className="mr-1 ml-[7px] flex size-5 items-center justify-center rounded border border-[#666] bg-[#484848] text-[#e6e6e6]">
            <Icon name="collection" className="size-[13px]" />
          </span>
          Collection
          <RowToggles exclude />
        </li>
        {objects.map((o) => (
          <li key={o.name} className="pl-[46px]">
            <TreeArrow />
            <span className={clsx('mr-1 ml-[7px] flex size-5 items-center justify-center rounded border text-[#c68148]', o.boxIcon ? 'border-[#666] bg-[#545454]' : 'border-transparent')}>
              <Icon name={o.icon} className="size-[15px]" />
            </span>
            {o.name}
            <span className={clsx('ml-5 flex size-5 items-center justify-center rounded border text-[#00b88a]', o.boxData ? 'border-[#666] bg-[#484848]' : 'border-transparent')}>
              <Icon name={o.data} className="size-[15px]" />
            </span>
            <RowToggles />
          </li>
        ))}
        {Array.from({ length: 9 }, (_, i) => (
          <li key={i} />
        ))}
      </ul>
      <span className="absolute top-[71px] left-[29px] h-[50px] w-px bg-[#5a5a5a]" />
    </section>
  );
}

const propertyTabs: { icon: string; color: string }[][] = [
  [{ icon: 'tool', color: 'text-[#a8a8a8]' }],
  [
    { icon: 'renderTab', color: 'text-[#b4b4b4]' },
    { icon: 'output', color: 'text-[#b4b4b4]' },
    { icon: 'viewLayer', color: 'text-[#e6e6e6]' },
    { icon: 'scene', color: 'text-[#b4b4b4]' },
    { icon: 'world', color: 'text-[#b35360]' },
  ],
  [{ icon: 'collectionLine', color: 'text-[#dcdcdc]' }],
  [
    { icon: 'objectTab', color: 'text-[#c68148]' },
    { icon: 'wrench', color: 'text-[#5f87d6]' },
    { icon: 'particles', color: 'text-[#5f87d6]' },
    { icon: 'physics', color: 'text-[#5f87d6]' },
    { icon: 'constraint', color: 'text-[#5f87d6]' },
    { icon: 'meshData', color: 'text-[#00b88a]' },
    { icon: 'material', color: 'text-[#b35360]' },
  ],
  [{ icon: 'texture', color: 'text-[#b35360]' }],
];

const dataPasses = [['Combined', true], ['Z', true], ['Mist', true], ['Normal', true], ['Position', true], ['Vector', false]] as [string, boolean][];

const lightPasses = [
  { group: 'Diffuse', items: ['Light', 'Color'] },
  { group: 'Specular', items: ['Light', 'Color'] },
  { group: 'Volume', items: ['Light'] },
  { group: 'Other', items: ['Emission', 'Environment', 'Shadow', 'Ambient Occlusion'] },
];

function SubHeader({ title }: { title: string }) {
  return (
    <h4 className="flex h-[25px] items-center gap-[5px] bg-[#3d3d3d] pl-[21px]">
      <Chevron className="size-2.5" />
      {title}
    </h4>
  );
}

function Properties() {
  return (
    <section className="flex min-h-0 flex-1 flex-col overflow-hidden rounded-lg bg-[#303030]">
      <div className="flex h-[25px] shrink-0 items-center justify-between pr-2 pb-0.5 pl-[9px]">
        <MenuButton icon="properties" label="Editor type" />
        <div className="pr-3">
          <SearchBox label="Search properties" />
        </div>
        <button aria-label="Options" className={clsx(box, 'flex w-5 items-center justify-center')}>
          <Chevron />
        </button>
      </div>
      <div className="flex min-h-0 flex-1">
        <div role="tablist" className="w-7 shrink-0 bg-[#1d1d1d] pt-2 pl-0.5">
          {propertyTabs.map((group, i) => (
            <div key={i} className="mb-[7px] border-b border-[#171717]">
              {group.map((t) => (
                <button
                  key={t.icon}
                  role="tab"
                  aria-label={t.icon}
                  className={clsx('flex h-7 w-[26px] items-center justify-center rounded-l', t.icon === 'viewLayer' && 'bg-[#303030]', t.color)}
                >
                  <Icon name={t.icon} className="size-[14px]" />
                </button>
              ))}
            </div>
          ))}
        </div>
        <div className="flex min-w-0 flex-1 flex-col overflow-hidden pr-px pl-2">
          <div className="flex h-[38px] shrink-0 items-center pr-2.5 pb-0.5 pl-[3px]">
            <Icon name="scene" className="size-[15px]" />
            <span className="ml-2">Scene</span>
            <Chevron dir="right" className="mr-[7px] ml-[13px] size-2.5" />
            <Icon name="viewLayer" className="size-[14px]" />
            <span className="ml-[9px] flex-1">ViewLayer</span>
            <button aria-label="Pin" className="text-[#989898]">
              <Icon name="pin" className="size-[15px]" />
            </button>
          </div>
          <div className="flex min-h-0 flex-1 justify-between">
            <div className="w-[calc(100%-7px)]">
              <div className="mb-0.5 h-[83px] rounded-md bg-[#3d3d3d]">
                <h3 className="flex h-[26px] items-center gap-[5px] px-[7px]">
                  <Chevron className="size-2.5" />
                  <span className="flex-1">View Layer</span>
                  <Grip />
                </h3>
                <div className="mt-1.5 flex h-[22px] items-center pr-4 pl-[114px]">
                  <Check label="Use for Rendering" checked className="flex-1 text-white" />
                  <span className="size-1 rounded-full bg-[#d8d8d8]" />
                </div>
                <Check label="Render Single Layer" className="h-[22px] pl-[114px]" />
              </div>
              <div className="overflow-hidden rounded-md bg-[#353535]">
                <h3 className="flex h-[25px] items-center gap-[5px] bg-[#3d3d3d] px-[7px]">
                  <Chevron className="size-2.5" />
                  <span className="flex-1">Passes</span>
                  <Grip />
                </h3>
                <SubHeader title="Data" />
                <div className="py-[7px]">
                  {dataPasses.map(([name, on]) => (
                    <Check key={name} label={name} checked={on} className={clsx('h-[22px] pl-[122px]', on && 'text-white')} />
                  ))}
                </div>
                <SubHeader title="Light" />
                <div className="flex flex-col gap-[5px] py-2">
                  {lightPasses.map((p) => (
                    <fieldset key={p.group} className="flex">
                      <span className="w-[122px] pr-2.5 text-right leading-5">{p.group}</span>
                      <div>
                        {p.items.map((n) => (
                          <Check key={n} label={n} className="h-5" />
                        ))}
                      </div>
                    </fieldset>
                  ))}
                  <label className="flex h-5 items-center pr-[9px] text-[#848484]">
                    <span className="w-[122px] pr-2.5 text-right whitespace-nowrap">Occlusion Distance</span>
                    <input disabled defaultValue="0.2 m" className="h-[19px] min-w-0 flex-1 rounded bg-[#444] text-center" />
                  </label>
                </div>
                <SubHeader title="Cryptomatte" />
                <div className="pt-[7px]">
                  <Check label="Object" className="h-[22px] pl-[122px]" />
                </div>
              </div>
            </div>
            <span className="-mt-7 h-[449px] w-1 rounded bg-[#3d3d3d]" />
          </div>
        </div>
      </div>
    </section>
  );
}

function StatusBar() {
  return (
    <footer className="flex h-[21px] shrink-0 items-center justify-between bg-[#181818] pr-3 pl-2.5 text-[#949494]">
      <div className="flex">
        {[['mouseL', 'Select'], ['mouseM', 'Rotate View'], ['mouseR', 'Object']].map(([icon, label]) => (
          <span key={label} className="flex w-[211px] items-center gap-[9px]">
            <Icon name={icon} className="size-[15px]" />
            {label}
          </span>
        ))}
      </div>
      <p className="whitespace-nowrap">
        Collection | Cube | Verts:8 | Faces:6 | Tris:12 | Objects:0/3 | Duration: 00:10+10 (Frame 1/250) | Memory: 68.0 MiB | VRAM: 1.1/6.0 GiB | 4.1.0 Alpha
      </p>
    </footer>
  );
}

export default function App() {
  return (
    <div className="flex h-screen flex-col overflow-hidden bg-[#141414] font-['Inter',sans-serif] text-[11px] leading-4 text-[#e6e6e6] tabular-nums">
      <TitleBar />
      <TopBar />
      <main className="flex min-h-0 flex-1 gap-1 pt-px">
        <div className="flex min-w-0 flex-1 flex-col gap-[3px]">
          <Viewport />
          <NodeEditor />
        </div>
        <div className="flex w-[332px] shrink-0 flex-col gap-[3px]">
          <Outliner />
          <Properties />
        </div>
      </main>
      <StatusBar />
    </div>
  );
}
